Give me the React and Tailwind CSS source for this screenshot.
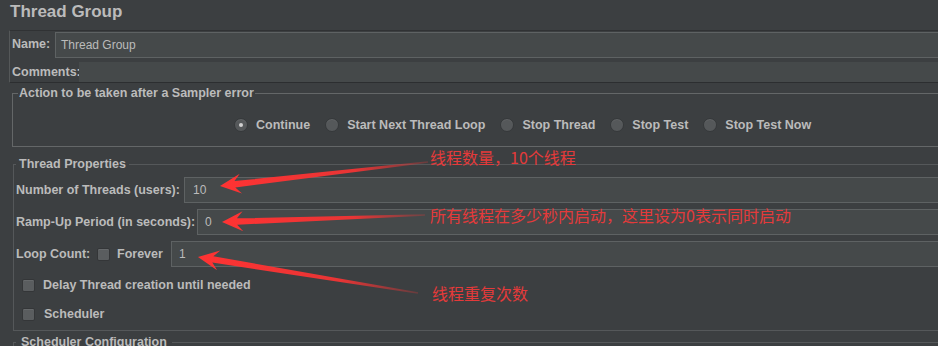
import React from 'react';

const arrowPoints = (tail, tip) => {
    const dx = tail[0] - tip[0];
    const dy = tail[1] - tip[1];
    const len = Math.hypot(dx, dy);
    const ux = dx / len, uy = dy / len;
    const px = -uy, py = ux;
    const headLen = 15, barb = 6, headW = 10, shaftHead = 3.2, shaftTail = 0.8;
    const bx = tip[0] + ux * headLen, by = tip[1] + uy * headLen;
    const pts = [
        tip,
        [bx + ux * barb + px * headW, by + uy * barb + py * headW],
        [bx + px * shaftHead, by + py * shaftHead],
        [tail[0] + px * shaftTail, tail[1] + py * shaftTail],
        [tail[0] - px * shaftTail, tail[1] - py * shaftTail],
        [bx - px * shaftHead, by - py * shaftHead],
        [bx + ux * barb - px * headW, by + uy * barb - py * headW],
    ];
    return pts.map(p => `${p[0].toFixed(1)},${p[1].toFixed(1)}`).join(' ');
};

const arrows = [
    { id: 'a1', tail: [428, 162], tip: [220, 186] },
    { id: 'a2', tail: [425, 215], tip: [222, 222] },
    { id: 'a3', tail: [418, 293], tip: [198, 257] },
];

const Field = ({ value, className }) => (
    <div className={`h-[26px] bg-[#45494a] border border-[#5e6263] flex items-center text-[12px] font-normal text-[#bbbbbb] ${className}`}>
        {value}
    </div>
);

const Radio = ({ checked }) => (
    <span className="w-[14px] h-[14px] rounded-full bg-[#55585a] border border-[#35383a] flex items-center justify-center shadow-[inset_0_1px_0_rgba(255,255,255,0.08)]">
        {checked && <span className="w-[4px] h-[4px] rounded-full bg-[#d0d0d0]" />}
    </span>
);

const Checkbox = () => (
    <span className="w-[13px] h-[13px] rounded-[2px] bg-[#5a5d5f] border border-[#343638] shadow-[inset_0_1px_0_rgba(255,255,255,0.08)]" />
);

const radios = [
    { label: 'Continue', checked: true },
    { label: 'Start Next Thread Loop' },
    { label: 'Stop Thread' },
    { label: 'Stop Test' },
    { label: 'Stop Test Now' },
];

export default function App() {
    return (
        <div className="relative w-[938px] h-[346px] overflow-hidden bg-[#3c3f41] text-[#bbbbbb] font-['Liberation_Sans','Noto_Sans_CJK_SC',sans-serif]">
            <div className="h-[30px] pl-[10px] pt-[1px] text-[17px] font-bold leading-[22px]">Thread Group</div>

            {/* name / comments */}
            <div className="ml-[9px] w-[940px] border-t border-l border-b border-t-[#303234] border-l-[#555859] border-b-[#2c2e30] text-[12.5px] font-bold">
                <div className="flex items-center h-[27px]">
                    <span className="w-[45px] pl-[2px]">Name:</span>
                    <Field value="Thread Group" className="flex-1 pl-[5px]" />
                </div>
                <div className="flex items-center h-[20px] mt-[4px]">
                    <span className="w-[69px] pl-[2px]">Comments:</span>
                    <div className="flex-1 h-[20px] bg-[#45494a]" />
                </div>
            </div>

            {/* sampler error action */}
            <fieldset className="mt-[3px] ml-[12px] w-[940px] border border-[#646768] px-[5px] pb-[13px]">
                <legend className="px-[1px] text-[12.5px] font-bold leading-[14px]">Action to be taken after a Sampler error</legend>
                <div className="mt-[17px] h-[16px] flex items-center gap-[15px] pl-[216px] text-[12.5px] font-bold">
                    {radios.map(r => (
                        <div key={r.label} className="flex items-center gap-[8px]">
                            <Radio checked={r.checked} />
                            <span>{r.label}</span>
                        </div>
                    ))}
                </div>
            </fieldset>

            {/* thread properties */}
            <fieldset className="mt-[10px] ml-[13px] w-[940px] border border-[#55585a] px-[2px] pb-[8px] text-[12.5px] font-bold">
                <legend className="px-[3px] leading-[14px]">Thread Properties</legend>
                <div className="mt-[6px] flex items-center h-[26px]">
                    <span className="w-[168px]">Number of Threads (users):</span>
                    <Field value="10" className="flex-1 pl-[8px]" />
                </div>
                <div className="mt-[6px] flex items-center h-[26px]">
                    <span className="w-[181px]">Ramp-Up Period (in seconds):</span>
                    <Field value="0" className="flex-1 pl-[7px]" />
                </div>
                <div className="mt-[6px] flex items-center h-[26px]">
                    <span className="w-[81px]">Loop Count:</span>
                    <Checkbox />
                    <span className="w-[61px] pl-[7px]">Forever</span>
                    <Field value="1" className="flex-1 pl-[7px]" />
                </div>
                <div className="mt-[10px] h-[16px] flex items-center gap-[8px] pl-[6px]">
                    <Checkbox />
                    <span>Delay Thread creation until needed</span>
                </div>
                <div className="mt-[13px] h-[16px] flex items-center gap-[9px] pl-[6px]">
                    <Checkbox />
                    <span>Scheduler</span>
                </div>
            </fieldset>

            <fieldset className="mt-[4px] ml-[13px] w-[940px] border border-[#55585a] px-[2px] pb-[8px] text-[12.5px] font-bold">
                <legend className="px-[5px] leading-[14px]">Scheduler Configuration</legend>
                <div className="h-[40px]" />
            </fieldset>

            {/* annotations */}
            <svg className="absolute inset-0 pointer-events-none" width="938" height="346">
                <defs>
                    {arrows.map(a => (
                        <linearGradient key={a.id} id={a.id} gradientUnits="userSpaceOnUse" x1={a.tail[0]} y1={a.tail[1]} x2={a.tip[0]} y2={a.tip[1]}>
                            <stop offset="0" stopColor="#e83535" stopOpacity="0.25" />
                            <stop offset="0.35" stopColor="#f03434" stopOpacity="0.95" />
                            <stop offset="1" stopColor="#ff3333" />
                        </linearGradient>
                    ))}
                </defs>
                {arrows.map(a => (
                    <polygon key={a.id} points={arrowPoints(a.tail, a.tip)} fill={`url(#${a.id})`} />
                ))}
            </svg>
            <span className="absolute left-[430px] top-[147px] text-[16px] leading-[20px] text-[#e43a3a] font-['Noto_Sans_CJK_SC',sans-serif]">线程数量，10个线程</span>
            <span className="absolute left-[430px] top-[205px] text-[16px] leading-[20px] text-[#e43a3a] font-['Noto_Sans_CJK_SC',sans-serif]">所有线程在多少秒内启动，这里设为0表示同时启动</span>
            <span className="absolute left-[432px] top-[283px] text-[16px] leading-[20px] text-[#e43a3a] font-['Noto_Sans_CJK_SC',sans-serif]">线程重复次数</span>
        </div>
    );
}
